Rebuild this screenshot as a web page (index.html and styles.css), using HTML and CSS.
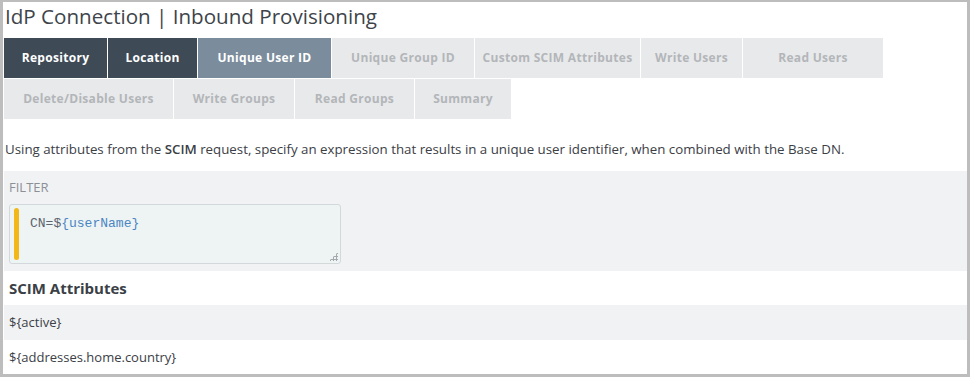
FILE: index.html
```html
<!DOCTYPE html>
<html lang="en">
<head>
    <meta charset="UTF-8">
    <title>IdP Connection | Inbound Provisioning</title>
    <link rel="stylesheet" href="styles.css">
</head>
<body>
    <div class="page">
        <h1 class="title">IdP Connection | Inbound Provisioning</h1>

        <div class="tabs">
            <div class="tab-row">
                <div class="tab done">Repository</div>
                <div class="tab done">Location</div>
                <div class="tab current">Unique User ID</div>
                <div class="tab">Unique Group ID</div>
                <div class="tab">Custom SCIM Attributes</div>
                <div class="tab">Write Users</div>
                <div class="tab">Read Users</div>
            </div>
            <div class="tab-row">
                <div class="tab">Delete/Disable Users</div>
                <div class="tab">Write Groups</div>
                <div class="tab">Read Groups</div>
                <div class="tab">Summary</div>
            </div>
        </div>

        <p class="intro">Using attributes from the <b>SCIM</b> request, specify an expression that results in a unique user identifier, when combined with the Base DN.</p>

        <div class="filter">
            <div class="filter-label">FILTER</div>
            <div class="expr-box">
                <span class="expr-bar"></span>
                <code class="expr"><span class="expr-plain">CN=$</span><span class="expr-var">{userName}</span></code>
                <span class="grip"></span>
            </div>
        </div>

        <div class="attributes">
            <div class="attr-title">SCIM Attributes</div>
            <div class="attr-row alt">${active}</div>
            <div class="attr-row">${addresses.home.country}</div>
        </div>
    </div>
</body>
</html>
```

FILE: styles.css
```css
* {
    margin: 0;
    padding: 0;
    box-sizing: border-box;
}

body {
    background: #bdbdbd;
    font-family: "Open Sans", "Liberation Sans", sans-serif;
    color: #3d4247;
    width: 970px;
    height: 377px;
    overflow: hidden;
}

.page {
    margin: 2px 3px 3px 3px;
    height: 372px;
    background: #fff;
    padding-left: 1px;
    overflow: hidden;
}

.title {
    height: 36px;
    padding: 1px 0 0 1px;
    font-size: 20.6px;
    font-weight: 400;
    line-height: 26px;
    color: #3e444a;
}

.tabs {
    display: flex;
    flex-direction: column;
    gap: 1px;
    height: 82px;
}

.tab-row {
    display: flex;
    gap: 1px;
}

.tab {
    height: 40px;
    line-height: 40px;
    text-align: center;
    font-size: 12px;
    font-weight: 700;
    letter-spacing: 0.3px;
    background: #e8e9eb;
    color: #b3b6b9;
    white-space: nowrap;
}

.tab-row:first-child .tab:nth-child(1) { width: 103px; }
.tab-row:first-child .tab:nth-child(2) { width: 89px; }
.tab-row:first-child .tab:nth-child(3) { width: 133px; }
.tab-row:first-child .tab:nth-child(4) { width: 142px; }
.tab-row:first-child .tab:nth-child(5) { width: 165px; }
.tab-row:first-child .tab:nth-child(6) { width: 101px; }
.tab-row:first-child .tab:nth-child(7) { width: 140px; }
.tab-row:last-child .tab:nth-child(1) { width: 169px; }
.tab-row:last-child .tab:nth-child(2) { width: 120px; }
.tab-row:last-child .tab:nth-child(3) { width: 119px; }
.tab-row:last-child .tab:nth-child(4) { width: 96px; }

.tab.done {
    background: #3e4b57;
    color: #fff;
}

.tab.current {
    background: #7b8c9c;
    color: #fff;
}

.intro {
    height: 51px;
    padding-top: 20px;
    padding-left: 1px;
    font-size: 13.3px;
    line-height: 18px;
    color: #3b4046;
}

.intro b {
    font-weight: 600;
}

.filter {
    height: 100px;
    background: #f1f2f4;
    padding: 8px 0 0 5px;
}

.filter-label {
    font-size: 13px;
    line-height: 17px;
    color: #8c9095;
    height: 25px;
}

.expr-box {
    position: relative;
    width: 332px;
    height: 60px;
    border: 1px solid #d3d8db;
    border-radius: 3px;
    background: #eef3f3;
    display: flex;
    padding: 3px 0 3px 4px;
}

.expr-bar {
    width: 5px;
    border-radius: 3px;
    background: #f2b817;
}

.expr {
    font-family: "Liberation Mono", "DejaVu Sans Mono", monospace;
    font-size: 13px;
    line-height: 18px;
    padding: 7px 0 0 11px;
}

.expr-plain {
    color: #5b6570;
}

.expr-var {
    color: #4a86c3;
}

.grip {
    position: absolute;
    right: 2px;
    bottom: 2px;
    width: 9px;
    height: 9px;
    background:
        radial-gradient(circle, #a4a9ad 1px, transparent 1.3px) 0 0 / 3px 3px;
    clip-path: polygon(100% 0, 100% 100%, 0 100%);
}

.attr-title {
    height: 34px;
    line-height: 34px;
    padding-left: 5px;
    font-size: 15px;
    font-weight: 700;
    color: #3a4046;
}

.attr-row {
    height: 35px;
    line-height: 35px;
    padding-left: 5px;
    font-size: 13px;
    color: #3b4046;
}

.attr-row.alt {
    background: #f1f2f4;
}
```
